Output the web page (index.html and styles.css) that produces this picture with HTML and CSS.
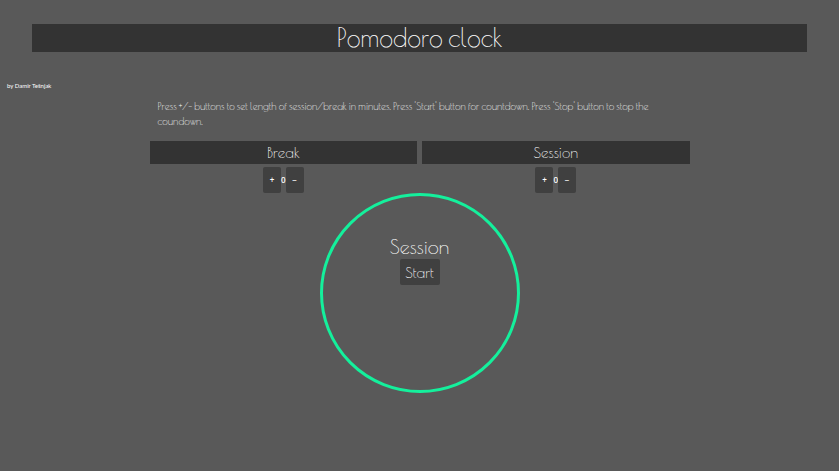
FILE: index.html
```html
<!DOCTYPE html>
<html lang="en">
<head>
<meta charset="utf-8">
<meta name="viewport" content="width=device-width, initial-scale=1">
<title>Pomodoro clock</title>
<link rel="stylesheet" href="styles.css">
</head>
<body>
<header>
  <h1 class="title">Pomodoro clock</h1>
  <p class="author">by Damir Tešnjak</p>
</header>
<main class="content">
  <p class="intro">Press +/- buttons to set length of session/break in minutes. Press 'Start' button for countdown. Press 'Stop' button to stop the coundown.</p>
  <div class="settings">
    <section class="setting">
      <h2 class="bar">Break</h2>
      <div class="stepper">
        <button class="button step" type="button" aria-label="Increase break">+</button>
        <span>0</span>
        <button class="button step" type="button" aria-label="Decrease break">−</button>
      </div>
    </section>
    <section class="setting">
      <h2 class="bar">Session</h2>
      <div class="stepper">
        <button class="button step" type="button" aria-label="Increase session">+</button>
        <span>0</span>
        <button class="button step" type="button" aria-label="Decrease session">−</button>
      </div>
    </section>
  </div>
  <section class="dial">
    <h2 class="phase">Session</h2>
    <button class="button start" type="button">Start</button>
  </section>
</main>
</body>
</html>
```
FILE: styles.css
```css
* {
  box-sizing: border-box;
}

body {
  margin: 0;
  background: #595959;
  color: #fff;
  font-family: "Poiret One", Lato, sans-serif;
  font-weight: 400;
  font-kerning: none;
}

h1, h2, p {
  margin: 0;
  font-weight: 400;
}

.title {
  margin: 24px 32px 0;
  background: #333;
  font-size: 25px;
  line-height: 28px;
  text-align: center;
}

.author {
  margin: 29px 7px 0;
  font: 400 6px/10px Lato, sans-serif;
}

.content {
  width: 540px;
  max-width: 100%;
  margin: 8px auto 0;
}

.intro {
  padding: 0 8px;
  font-size: 10px;
  line-height: 15px;
}

.settings {
  display: grid;
  grid-template-columns: 1fr 1fr;
  gap: 5px;
  margin-top: 12px;
}

.bar {
  background: #333;
  font-size: 15px;
  line-height: 23px;
  text-align: center;
}

.stepper {
  display: flex;
  justify-content: center;
  align-items: center;
  margin-top: 3px;
  font: 600 8px/10px "Open Sans", sans-serif;
}

.button {
  height: 26px;
  padding: 0;
  border: 0;
  border-radius: 2px;
  background: #404040;
  color: #fff;
  font: inherit;
}

.step {
  width: 18px;
}

.dial {
  display: flex;
  flex-direction: column;
  align-items: center;
  width: 200px;
  aspect-ratio: 1;
  margin: 0 auto;
  padding-top: 39px;
  border: 3px solid #14f09c;
  border-radius: 50%;
}

.phase {
  font-size: 20px;
  line-height: 24px;
}

.start {
  width: 40px;
  font-size: 15px;
}
```
